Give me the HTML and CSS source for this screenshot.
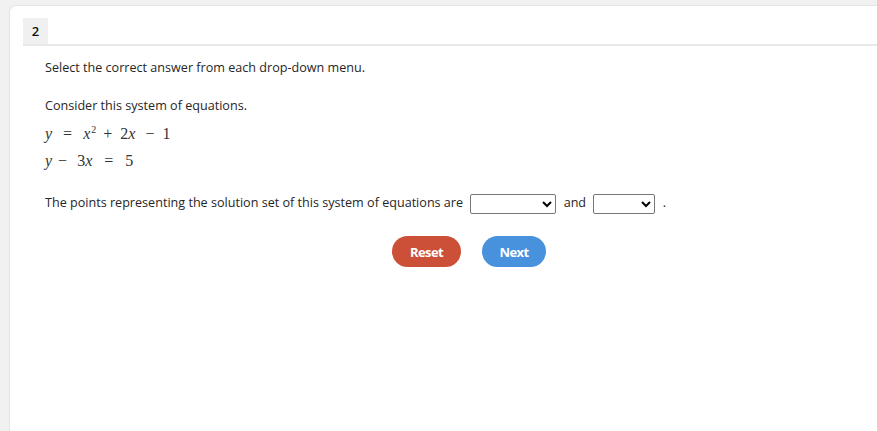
FILE: index.html
```html
<!DOCTYPE html>
<html>
<head>
<meta charset="utf-8">
<link rel="stylesheet" href="styles.css">
</head>
<body>
<div class="card">
  <div class="head">
    <span class="num">2</span>
  </div>
  <div class="body">
    <p class="instr">Select the correct answer from each drop-down menu.</p>
    <p class="consider">Consider this system of equations.</p>
    <div class="eq eq1"><i>y</i><span class="op o1">=</span><i>x</i><sup>2</sup><span class="op o2">+</span>2<i>x</i><span class="op o3">−</span>1</div>
    <div class="eq eq2"><i>y</i><span class="op o4">−</span>3<i>x</i><span class="op o5">=</span>5</div>
    <p class="q">The points representing the solution set of this system of equations are
      <select class="dd dd1"><option></option></select>
      and
      <select class="dd dd2"><option></option></select>
      .</p>
    <div class="btns">
      <button class="btn reset">Reset</button>
      <button class="btn next">Next</button>
    </div>
  </div>
</div>
</body>
</html>
```
FILE: styles.css
```css
html, body {
  margin: 0;
  padding: 0;
  background: #f1f1f1;
  height: 100%;
  overflow: hidden;
}
body {
  font-family: "Open Sans", sans-serif;
  font-size: 12.6px;
  color: #262626;
  padding: 5px 0 0 9px;
  box-sizing: border-box;
}
.card {
  background: #fff;
  border: 1px solid #e4e4e4;
  border-right: none;
  border-bottom: none;
  border-top-left-radius: 7px;
  height: 100%;
  padding: 12px 0 0 13px;
  box-sizing: border-box;
}
.head {
  border-bottom: 2px solid #e9e9e9;
  height: 26px;
  display: flex;
}
.num {
  background: #f0f0f0;
  width: 25px;
  height: 26px;
  display: flex;
  align-items: center;
  justify-content: center;
  font-size: 13px;
  font-weight: 600;
  color: #111;
}
.body {
  padding-left: 22px;
}
p { margin: 0; }
.instr { margin-top: 13px; line-height: 18px; }
.consider { margin-top: 20px; line-height: 18px; }
.eq {
  font-family: "Liberation Serif", serif;
  font-size: 16px;
  color: #333;
  height: 27px;
  line-height: 27px;
}
.eq1 { margin-top: 5px; }
.eq i { font-style: italic; }
.eq sup { font-size: 10px; vertical-align: 6px; line-height: 0; margin-left: 1px; }
.op { display: inline-block; }
.o1 { margin: 0 11px; }
.o2 { margin: 0 8px 0 7px; }
.o3 { margin: 0 8px 0 10px; }
.o4 { margin: 0 10px 0 6px; }
.o5 { margin: 0 12px; }
.q { margin-top: 18px; line-height: 22px; }
.dd {
  height: 20px;
  vertical-align: middle;
  border: 1px solid #767676;
  border-radius: 2px;
  background: #fff;
  margin: 0 4px;
}
.dd1 { width: 86px; }
.dd2 { width: 62px; }
.btns {
  display: flex;
  gap: 21px;
  margin-top: 22px;
  padding-left: 347px;
}
.btn {
  border: none;
  border-radius: 16px;
  height: 31px;
  color: #fff;
  font-family: "Open Sans", sans-serif;
  font-size: 13px;
  font-weight: 700;
  letter-spacing: -0.6px;
  padding: 0;
}
.reset { background: #cc4f38; width: 69px; }
.next { background: #4891dc; width: 64px; }
```
